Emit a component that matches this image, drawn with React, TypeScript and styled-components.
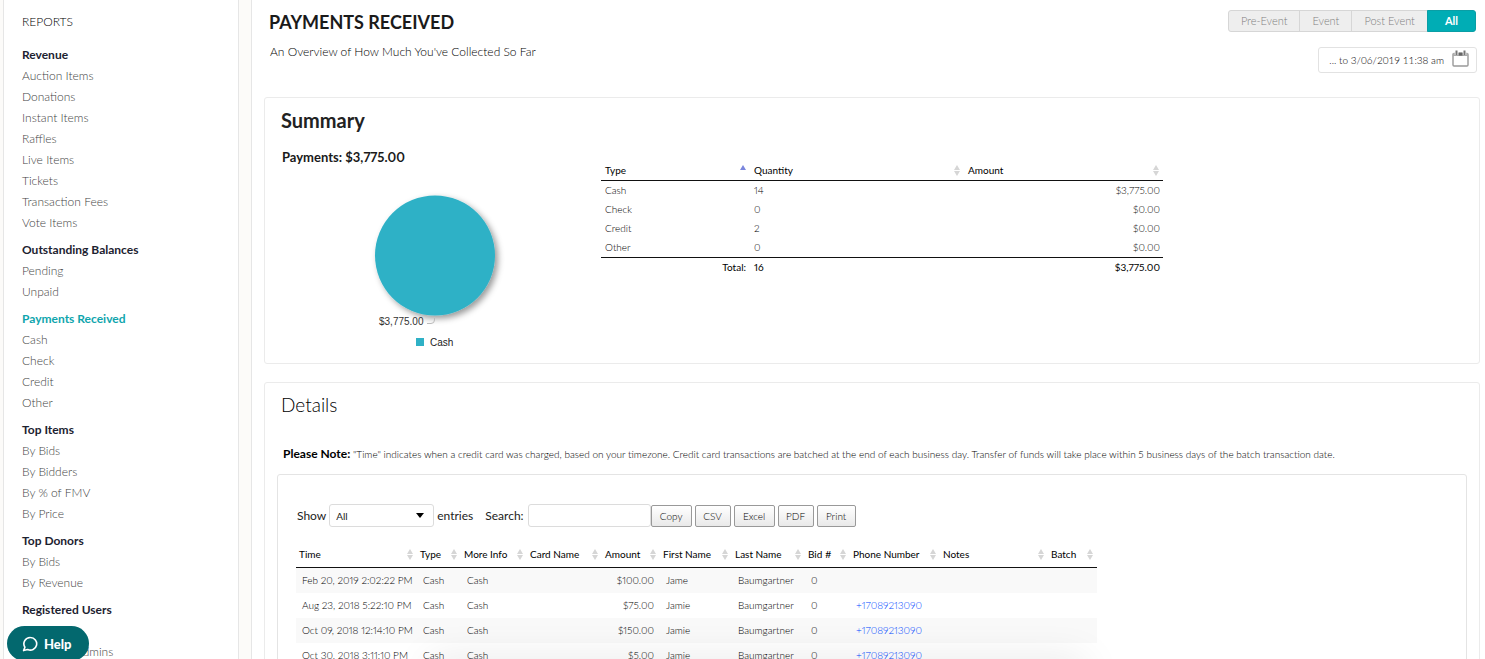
import React from 'react';
import styled, { createGlobalStyle } from 'styled-components';

const GlobalStyle = createGlobalStyle`
  * { box-sizing: border-box; }
  body {
    margin: 0;
    background: #fcfbf9;
    color: #222;
    font-family: Lato, "Open Sans", sans-serif;
    font-size: 12px;
    line-height: 20px;
    font-variant-numeric: proportional-nums;
  }
  h1, h2, h3, p, ul { margin: 0; padding: 0; }
  button, input, select { font-family: inherit; }
`;

const Page = styled.div`
  display: flex;
  gap: 12px;
  height: 100vh;
  padding-left: 3px;
  overflow: hidden;
`;

const Sidebar = styled.nav`
  flex: 0 0 236px;
  padding: 11px 18px;
  background: #fff;
  border: solid #e6e6e6;
  border-width: 0 1px;
`;

const SidebarTitle = styled.h2`
  margin-bottom: 6px;
  font-size: 12px;
  font-weight: 300;
  line-height: 21px;
  color: #000;
`;

const Group = styled.section`
  padding-top: 6px;
`;

const GroupTitle = styled.h3<{ $active?: boolean }>`
  font-size: 12px;
  font-weight: 700;
  line-height: 21px;
  color: ${(p) => (p.$active ? '#0fa5ad' : '#1c2230')};
`;

const LinkList = styled.ul`
  list-style: none;
`;

const SideLink = styled.a`
  display: block;
  font-weight: 300;
  line-height: 21px;
  color: #444;
  text-decoration: none;
`;

const Main = styled.main`
  flex: 1;
  min-width: 0;
  padding: 10px 5px 0 12px;
  background: #fff;
  border-left: 1px solid #e6e6e6;
`;

const Header = styled.header`
  display: flex;
  justify-content: space-between;
  height: 87px;
  padding: 0 4px 0 5px;
`;

const Title = styled.h1`
  font-size: 18px;
  line-height: 24px;
  font-weight: 700;
  color: #1a1a1a;
`;

const Subtitle = styled.p`
  margin-top: 8px;
  padding-left: 1px;
  font-size: 12px;
  font-weight: 300;
  color: #000;
`;

const HeaderTools = styled.div`
  display: flex;
  flex-direction: column;
  align-items: flex-end;
  gap: 15px;
`;

const Segments = styled.div`
  display: flex;
`;

const Segment = styled.button<{ $active?: boolean }>`
  height: 22px;
  padding: 0 12px;
  margin-left: -1px;
  border: 1px solid ${(p) => (p.$active ? '#0a9ea5' : '#d6d6d6')};
  background: ${(p) => (p.$active ? '#00adb5' : '#eee')};
  color: ${(p) => (p.$active ? '#fff' : '#808080')};
  font-size: 11px;
  font-weight: ${(p) => (p.$active ? 700 : 300)};
  line-height: 20px;

  &:first-child { border-radius: 3px 0 0 3px; }
  &:last-child { padding: 0 17px; border-radius: 0 3px 3px 0; }
`;

const DateRange = styled.button`
  display: flex;
  align-items: center;
  gap: 8px;
  height: 26px;
  padding: 0 7px 0 10px;
  margin-right: -1px;
  border: 1px solid #e2e2e2;
  border-radius: 3px;
  background: #fff;
  color: #000;
  font-size: 10px;
  font-weight: 300;
`;

const CalendarIcon = styled.svg`
  width: 17px;
  height: 17px;
  margin-bottom: 3px;
`;

const Card = styled.section`
  padding: 9px 12px 0 16px;
  margin-bottom: 18px;
  border: 1px solid #ebebeb;
  border-radius: 3px;
`;

const SummaryCard = styled(Card)`
  height: 267px;
`;

const CardTitle = styled.h2<{ $light?: boolean }>`
  font-size: ${(p) => (p.$light ? 19 : 20)}px;
  font-weight: ${(p) => (p.$light ? 300 : 700)};
  line-height: 26px;
  color: ${(p) => (p.$light ? '#000' : '#222')};
`;

const SummaryBody = styled.div`
  display: flex;
  align-items: flex-start;
  padding-top: 14px;
`;

const ChartPane = styled.div`
  flex: 0 0 320px;
`;

const PaymentsTotal = styled.p`
  padding-left: 1px;
  font-size: 13px;
  font-weight: 700;
  color: #1a1a1a;
`;

const PieChart = styled.svg`
  display: block;
  width: 320px;
  height: 180px;
  font-family: "Liberation Sans", Arial, sans-serif;
  font-size: 10px;
`;

const Caret = styled.svg`
  flex: none;
  width: 6px;
  height: 11px;
`;

const HeadCell = styled.div`
  display: flex;
  align-items: center;
  justify-content: space-between;
`;

const SummaryTable = styled.table`
  flex: 0 1 562px;
  width: 562px;
  margin-top: 13px;
  table-layout: fixed;
  border-collapse: collapse;
  font-size: 10px;
  line-height: 19px;
  color: #000;

  th, td { padding: 0 4px; text-align: left; font-weight: 300; }
  td:last-child { padding-right: 3px; text-align: right; }
  thead th { line-height: 20px; font-weight: 400; }
  thead tr { border-bottom: 1px solid #111; }
  tfoot tr { border-top: 1px solid #111; }
  tfoot td { font-weight: 400; }
  tfoot td:first-child { text-align: right; }
`;

const Col = styled.col<{ $w: number }>`
  width: ${(p) => p.$w}px;
`;

const Note = styled.p`
  padding: 26px 0 10px 2px;
  font-size: 10px;
  font-weight: 300;
  white-space: nowrap;
  color: #000;

  strong { font-size: 12px; font-weight: 700; }
`;

const TablePanel = styled.div`
  min-height: 260px;
  margin-left: -4px;
  padding: 29px 18px 0;
  border: 1px solid #e4e4e4;
  border-radius: 3px;
`;

const Toolbar = styled.div`
  display: flex;
  align-items: center;
  padding-left: 1px;
`;

const Label = styled.label`
  display: flex;
  align-items: center;
  gap: 3px;
  margin-right: 12px;
  font-weight: 400;
  color: #222;

  & + & { gap: 4px; margin-right: 0; }
`;

const LengthWrap = styled.span`
  position: relative;
  display: inline-flex;

  &::after {
    content: "";
    position: absolute;
    right: 10px;
    top: 9px;
    border: solid transparent;
    border-width: 5px 4px 0;
    border-top-color: #000;
    pointer-events: none;
  }
`;

const LengthSelect = styled.select`
  width: 105px;
  height: 23px;
  padding: 0 6px;
  appearance: none;
  border: 1px solid #dcdcdc;
  border-radius: 3px;
  background: #fff;
  color: #222;
  font-size: 10px;
`;

const SearchInput = styled.input`
  width: 123px;
  height: 23px;
  padding: 0 6px;
  border: 1px solid #dcdcdc;
  border-radius: 3px;
  background: #fff;
  font-size: 10px;
`;

const ExportGroup = styled.div`
  display: flex;
  gap: 3px;
`;

const ExportButton = styled.button<{ $w: number }>`
  width: ${(p) => p.$w}px;
  height: 22px;
  padding: 0;
  border: 1px solid #999;
  border-radius: 2px;
  background: linear-gradient(#fff, #e9e9e9);
  color: #000;
  font-size: 10px;
  font-weight: 300;
`;

const DetailsTable = styled.table`
  width: 801px;
  margin-top: 14px;
  table-layout: fixed;
  border-collapse: collapse;
  font-size: 10px;
  line-height: 25px;
  color: #000;
  white-space: nowrap;

  thead tr { border-bottom: 1px solid #111; }
  th { padding: 0 4px 0 3px; text-align: left; font-weight: 400; line-height: 26px; }
  td { padding: 0 0 0 6px; font-weight: 300; }
  td:nth-child(5) { padding: 0 6px 0 0; text-align: right; }
  tbody tr:nth-child(odd) { background: #f9f9f9; }
  a { color: #0048ff; text-decoration: none; }
`;

const HelpButton = styled.button`
  position: fixed;
  left: 7px;
  bottom: -2px;
  display: flex;
  align-items: center;
  gap: 6px;
  height: 35px;
  padding: 0 17px 0 15px;
  border: 0;
  border-radius: 18px;
  background: #03686e;
  color: #fff;
  font-size: 13px;
  font-weight: 900;
`;

const BottomShade = styled.div`
  position: fixed;
  left: 430px;
  right: 400px;
  top: 100%;
  height: 20px;
  box-shadow: 0 4px 40px rgba(0, 0, 0, 0.14);
  pointer-events: none;
`;

type MenuGroup = { title: string; active?: boolean; items: string[] };

const menu: MenuGroup[] = [
  {
    title: 'Revenue',
    items: ['Auction Items', 'Donations', 'Instant Items', 'Raffles', 'Live Items', 'Tickets', 'Transaction Fees', 'Vote Items'],
  },
  { title: 'Outstanding Balances', items: ['Pending', 'Unpaid'] },
  { title: 'Payments Received', active: true, items: ['Cash', 'Check', 'Credit', 'Other'] },
  { title: 'Top Items', items: ['By Bids', 'By Bidders', 'By % of FMV', 'By Price'] },
  { title: 'Top Donors', items: ['By Bids', 'By Revenue'] },
  { title: 'Registered Users', items: ['Bidders', 'Volunteer Admins'] },
];

const summaryRows = [
  ['Cash', '14', '$3,775.00'],
  ['Check', '0', '$0.00'],
  ['Credit', '2', '$0.00'],
  ['Other', '0', '$0.00'],
];

const detailColumns: [string, number][] = [
  ['Time', 121], ['Type', 44], ['More Info', 66], ['Card Name', 75], ['Amount', 58], ['First Name', 72],
  ['Last Name', 73], ['Bid #', 45], ['Phone Number', 90], ['Notes', 108], ['Batch', 49],
];

const detailRows = [
  { time: 'Feb 20, 2019 2:02:22 PM', amount: '$100.00', first: 'Jame', phone: '' },
  { time: 'Aug 23, 2018 5:22:10 PM', amount: '$75.00', first: 'Jamie', phone: '+17089213090' },
  { time: 'Oct 09, 2018 12:14:10 PM', amount: '$150.00', first: 'Jamie', phone: '+17089213090' },
  { time: 'Oct 30, 2018 3:11:10 PM', amount: '$5.00', first: 'Jamie', phone: '+17089213090' },
];

const exportFormats: [string, number][] = [['Copy', 41], ['CSV', 36], ['Excel', 41], ['PDF', 36], ['Print', 39]];

function SortCaret({ sorted }: { sorted?: boolean }) {
  return (
    <Caret viewBox="0 0 6 11" aria-hidden="true">
      <path d="M3 0L6 5H0Z" fill={sorted ? '#7a86dd' : '#d6d6d6'} />
      {!sorted && <path d="M0 6H6L3 11Z" fill="#d6d6d6" />}
    </Caret>
  );
}

export default function App() {
  return (
    <>
      <GlobalStyle />
      <Page>
        <Sidebar>
          <SidebarTitle>REPORTS</SidebarTitle>
          {menu.map((group) => (
            <Group key={group.title}>
              <GroupTitle $active={group.active}>{group.title}</GroupTitle>
              <LinkList>
                {group.items.map((item) => (
                  <li key={item}>
                    <SideLink href="#">{item}</SideLink>
                  </li>
                ))}
              </LinkList>
            </Group>
          ))}
        </Sidebar>

        <Main>
          <Header>
            <div>
              <Title>PAYMENTS RECEIVED</Title>
              <Subtitle>An Overview of How Much You've Collected So Far</Subtitle>
            </div>
            <HeaderTools>
              <Segments>
                <Segment>Pre-Event</Segment>
                <Segment>Event</Segment>
                <Segment>Post Event</Segment>
                <Segment $active>All</Segment>
              </Segments>
              <DateRange>
                ... to 3/06/2019 11:38 am
                <CalendarIcon viewBox="0 0 17 17" aria-hidden="true">
                  <rect x="1" y="3.5" width="15" height="12.5" rx="1" fill="#fff" stroke="#999" strokeWidth="1.4" />
                  <path d="M1 3h15v3H1z" fill="#aaa" />
                  <path d="M4.5 0.5v4.5M12.5 0.5v4.5" stroke="#fff" strokeWidth="3.4" />
                  <path d="M4.5 0.5v4.5M12.5 0.5v4.5" stroke="#777" strokeWidth="2" />
                  <path d="M6.8 2.5h3.6v3.1H6.8z" fill="#666" />
                </CalendarIcon>
              </DateRange>
            </HeaderTools>
          </Header>

          <SummaryCard>
            <CardTitle>Summary</CardTitle>
            <SummaryBody>
              <ChartPane>
                <PaymentsTotal>Payments: $3,775.00</PaymentsTotal>
                <PieChart viewBox="0 0 320 180" role="img" aria-label="Payments by type">
                  <defs>
                    <filter id="pieShadow" x="-20%" y="-20%" width="150%" height="150%">
                      <feDropShadow dx="3" dy="3" stdDeviation="3" floodColor="#000" floodOpacity="0.4" />
                    </filter>
                  </defs>
                  <circle cx="154" cy="88.5" r="60" fill="#2fb1c6" filter="url(#pieShadow)" />
                  <path d="M153.500 151v2q0 3.500-3.500 3.500h-4" fill="none" stroke="#bbb" />
                  <text x="98" y="158" fill="#333">$3,775.00</text>
                  <rect x="135" y="171" width="8" height="8" fill="#2fb1c6" />
                  <text x="149" y="179" fill="#222">Cash</text>
                </PieChart>
              </ChartPane>
              <SummaryTable>
                <colgroup>
                  <Col $w={149} />
                  <Col $w={214} />
                  <Col $w={199} />
                </colgroup>
                <thead>
                  <tr>
                    <th><HeadCell>Type<SortCaret sorted /></HeadCell></th>
                    <th><HeadCell>Quantity<SortCaret /></HeadCell></th>
                    <th><HeadCell>Amount<SortCaret /></HeadCell></th>
                  </tr>
                </thead>
                <tbody>
                  {summaryRows.map((row) => (
                    <tr key={row[0]}>
                      {row.map((cell, i) => <td key={i}>{cell}</td>)}
                    </tr>
                  ))}
                </tbody>
                <tfoot>
                  <tr><td>Total:</td><td>16</td><td>$3,775.00</td></tr>
                </tfoot>
              </SummaryTable>
            </SummaryBody>
          </SummaryCard>

          <Card>
            <CardTitle $light>Details</CardTitle>
            <Note>
              <strong>Please Note:</strong> "Time" indicates when a credit card was charged, based on your timezone. Credit
              card transactions are batched at the end of each business day. Transfer of funds will take place within 5
              business days of the batch transaction date.
            </Note>
            <TablePanel>
              <Toolbar>
                <Label>
                  Show
                  <LengthWrap>
                    <LengthSelect defaultValue="All">
                      <option>All</option>
                    </LengthSelect>
                  </LengthWrap>
                  entries
                </Label>
                <Label>
                  Search:
                  <SearchInput type="search" />
                </Label>
                <ExportGroup>
                  {exportFormats.map(([name, width]) => (
                    <ExportButton key={name} $w={width}>{name}</ExportButton>
                  ))}
                </ExportGroup>
              </Toolbar>
              <DetailsTable>
                <colgroup>
                  {detailColumns.map(([name, width]) => <Col key={name} $w={width} />)}
                </colgroup>
                <thead>
                  <tr>
                    {detailColumns.map(([name]) => (
                      <th key={name}><HeadCell>{name}<SortCaret /></HeadCell></th>
                    ))}
                  </tr>
                </thead>
                <tbody>
                  {detailRows.map((row) => (
                    <tr key={row.time}>
                      <td>{row.time}</td>
                      <td>Cash</td>
                      <td>Cash</td>
                      <td />
                      <td>{row.amount}</td>
                      <td>{row.first}</td>
                      <td>Baumgartner</td>
                      <td>0</td>
                      <td>{row.phone && <a href={`tel:${row.phone}`}>{row.phone}</a>}</td>
                      <td />
                      <td />
                    </tr>
                  ))}
                </tbody>
              </DetailsTable>
            </TablePanel>
          </Card>
        </Main>
      </Page>
      <BottomShade />
      <HelpButton>
        <svg width="16" height="16" viewBox="0 0 16 16" fill="none" stroke="#fff" strokeWidth="1.6" strokeLinejoin="round" aria-hidden="true">
          <path d="M8.5 1.5a6.3 6.3 0 1 1-2.8 12L1.6 14.6l1.3-3.4A6.3 6.3 0 0 1 8.5 1.5z" />
        </svg>
        Help
      </HelpButton>
    </>
  );
}
